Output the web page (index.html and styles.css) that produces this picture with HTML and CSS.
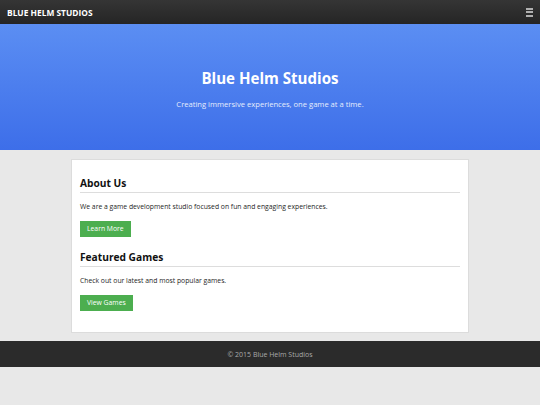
FILE: index.html
```html
<!DOCTYPE html>
<html>
<head>
<meta charset="utf-8">
<link rel="stylesheet" href="styles.css">
</head>
<body>
<header class="topbar">
  <div class="brand">BLUE HELM STUDIOS</div>
  <div class="menu"><span></span><span></span><span></span></div>
</header>
<section class="hero">
  <h1 class="hero-title">Blue Helm Studios</h1>
  <p class="hero-sub">Creating immersive experiences, one game at a time.</p>
</section>
<main class="wrap">
  <div class="card">
    <h2 class="sec-title">About Us</h2>
    <p class="sec-text">We are a game development studio focused on fun and engaging experiences.</p>
    <a class="btn">Learn More</a>
    <h2 class="sec-title second">Featured Games</h2>
    <p class="sec-text">Check out our latest and most popular games.</p>
    <a class="btn">View Games</a>
  </div>
</main>
<footer class="footer">&copy; 2015 Blue Helm Studios</footer>
</body>
</html>
```
FILE: styles.css
```css
html, body { margin: 0; padding: 0; }
body {
  background: #e8e8e8;
  font-family: "Open Sans", "DejaVu Sans", sans-serif;
  color: #222;
}
.topbar {
  height: 24px;
  background: linear-gradient(#353535, #252525);
  display: flex;
  align-items: center;
  justify-content: space-between;
  padding: 0 7px;
}
.brand {
  color: #fff;
  font-weight: 700;
  font-size: 8.4px;
}
.menu {
  display: flex;
  flex-direction: column;
  gap: 1.5px;
  width: 7px;
}
.menu span {
  display: block;
  height: 2px;
  background: #b0b0b0;
}
.hero {
  height: 124px;
  padding-top: 2px;
  background: linear-gradient(#5b8ef3, #3d6ee9);
  display: flex;
  flex-direction: column;
  align-items: center;
  justify-content: center;
  color: #fff;
}
.hero-title {
  margin: 0;
  font-size: 15.1px;
  line-height: 20px;
  font-weight: 700;
}
.hero-sub {
  margin: 11px 0 0;
  font-size: 7.6px;
  line-height: 10px;
  color: #e6edfc;
}
.wrap {
  display: flex;
  justify-content: center;
  padding: 9px 0 8px;
}
.card {
  width: 380px;
  background: #fff;
  border: 1px solid #dcdcdc;
  padding: 16px 8px 21px;
  display: flex;
  flex-direction: column;
  align-items: flex-start;
}
.sec-title {
  margin: 0;
  align-self: stretch;
  font-size: 10.2px;
  line-height: 14px;
  font-weight: 700;
  color: #111;
  padding-bottom: 2px;
  border-bottom: 1px solid #ddd;
}
.sec-title.second { margin-top: 13px; }
.sec-text {
  margin: 9px 0 9px;
  font-size: 6.8px;
  line-height: 10px;
  color: #1e1e1e;
}
.btn {
  display: block;
  background: #4cae4f;
  color: #fff;
  font-size: 6.8px;
  padding: 4px 7px;
  line-height: 8px;
}
.footer {
  height: 26px;
  background: #2b2b2b;
  color: #aaa;
  font-size: 7px;
  display: flex;
  align-items: center;
  justify-content: center;
}
```
